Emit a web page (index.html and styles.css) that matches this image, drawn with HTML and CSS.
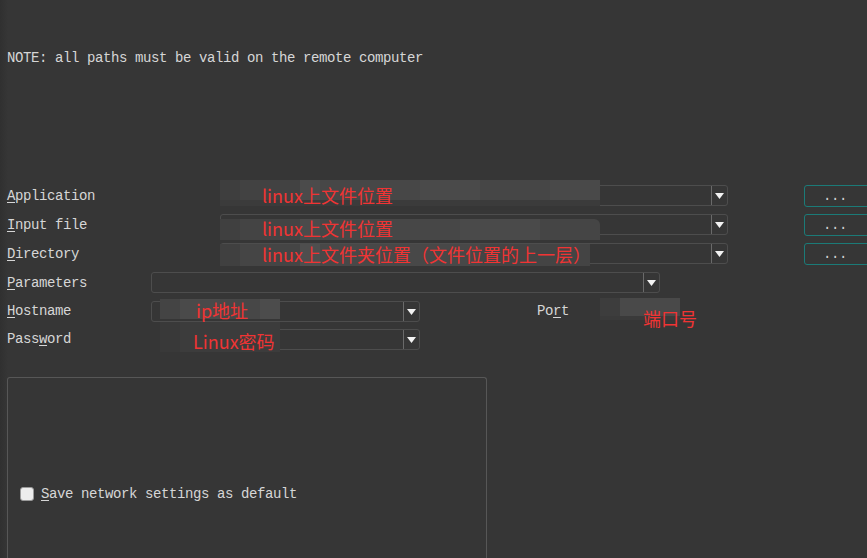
FILE: index.html
```html
<!DOCTYPE html>
<html>
<head>
<meta charset="utf-8">
<link rel="stylesheet" href="styles.css">
</head>
<body>
<div class="page">
  <div class="note">NOTE: all paths must be valid on the remote computer</div>

  <div class="form">
    <div class="row">
      <div class="label"><u>A</u>pplication</div>
      <div class="combo combo-path"><div class="drop"><svg width="9" height="6" viewBox="0 0 9 6"><polygon points="0,0 9,0 4.5,6" fill="#f2f2f2"/></svg></div></div>
      <button class="browse">...</button>
    </div>
    <div class="row">
      <div class="label"><u>I</u>nput file</div>
      <div class="combo combo-path"><div class="drop"><svg width="9" height="6" viewBox="0 0 9 6"><polygon points="0,0 9,0 4.5,6" fill="#f2f2f2"/></svg></div></div>
      <button class="browse">...</button>
    </div>
    <div class="row">
      <div class="label"><u>D</u>irectory</div>
      <div class="combo combo-path"><div class="drop"><svg width="9" height="6" viewBox="0 0 9 6"><polygon points="0,0 9,0 4.5,6" fill="#f2f2f2"/></svg></div></div>
      <button class="browse">...</button>
    </div>
    <div class="row">
      <div class="label"><u>P</u>arameters</div>
      <div class="combo combo-params"><div class="drop"><svg width="9" height="6" viewBox="0 0 9 6"><polygon points="0,0 9,0 4.5,6" fill="#f2f2f2"/></svg></div></div>
    </div>
    <div class="row row-short">
      <div class="label"><u>H</u>ostname</div>
      <div class="combo combo-host"><div class="drop"><svg width="9" height="6" viewBox="0 0 9 6"><polygon points="0,0 9,0 4.5,6" fill="#f2f2f2"/></svg></div></div>
      <div class="port-label">Po<u>r</u>t</div>
    </div>
    <div class="row row-short">
      <div class="label">Pass<u>w</u>ord</div>
      <div class="combo combo-host"><div class="drop"><svg width="9" height="6" viewBox="0 0 9 6"><polygon points="0,0 9,0 4.5,6" fill="#f2f2f2"/></svg></div></div>
    </div>
  </div>

  <div class="group">
    <label class="check-row"><span class="check"></span><span><u>S</u>ave network settings as default</span></label>
  </div>
</div>

<div class="mosaic m-app"></div>
<div class="mosaic m-input"></div>
<div class="mosaic m-dir"></div>
<div class="mosaic m-host"></div>
<div class="mosaic m-pass"></div>
<div class="mosaic m-port"></div>

<div class="note-red r-app">linux上文件位置</div>
<div class="note-red r-input">linux上文件位置</div>
<div class="note-red r-dir">linux上文件夹位置（文件位置的上一层）</div>
<div class="note-red r-host">ip地址</div>
<div class="note-red r-pass">Linux密码</div>
<div class="note-red r-port">端口号</div>
</body>
</html>
```

FILE: styles.css
```css
html, body {
  margin: 0;
  padding: 0;
  height: 100%;
}
body {
  background: linear-gradient(to right, #303030 0, #363636 8px) #363636;
  overflow: hidden;
  position: relative;
  font-family: "Liberation Mono", "DejaVu Sans Mono", monospace;
  font-size: 14px;
  letter-spacing: -0.4px;
  color: #d6d6d6;
}
u {
  text-decoration: underline;
  text-underline-offset: 2px;
  text-decoration-thickness: 1px;
}
.page {
  padding-left: 7px;
  padding-top: 50px;
}
.note {
  line-height: 16px;
  height: 16px;
  white-space: nowrap;
}
.form {
  margin-top: 115px;
}
.row {
  display: flex;
  align-items: center;
  height: 29px;
}
.row-short {
  height: 28px;
}
.label {
  width: 144px;
  flex: none;
  white-space: nowrap;
}
.combo {
  flex: none;
  height: 21px;
  box-sizing: border-box;
  border: 1px solid #4d4d4d;
  border-radius: 3px;
  display: flex;
  justify-content: flex-end;
}
.drop {
  width: 15px;
  border-left: 1px solid #6a6a6a;
  display: flex;
  align-items: center;
  justify-content: center;
}
.drop svg {
  display: block;
  margin-top: 1px;
}
.combo-path {
  margin-left: 69px;
  width: 508px;
}
.combo-params {
  width: 509px;
}
.combo-host {
  width: 269px;
}
.browse {
  flex: none;
  margin-left: 76px;
  width: 66px;
  height: 22px;
  box-sizing: border-box;
  border: 1px solid #1b7b78;
  border-radius: 3px;
  background: #363636;
  color: #d0d0d0;
  font-family: "Liberation Mono", monospace;
  font-size: 14px;
  letter-spacing: -0.4px;
  text-align: left;
  padding: 0 0 0 18px;
  line-height: 18px;
}
.port-label {
  margin-left: 117px;
  white-space: nowrap;
}
.group {
  margin-top: 24px;
  width: 480px;
  height: 182px;
  box-sizing: border-box;
  border: 1px solid #575757;
  border-bottom: none;
  border-radius: 3px 3px 0 0;
  padding: 108px 0 0 12px;
}
.check-row {
  display: flex;
  align-items: center;
  gap: 7px;
  line-height: 16px;
  white-space: nowrap;
}
.check {
  width: 14px;
  height: 14px;
  box-sizing: border-box;
  border-radius: 3px;
  background: #ededed;
  border: 1px solid #9a9a9a;
  flex: none;
}

/* redaction mosaics laid over the screenshot fields */
.mosaic {
  position: absolute;
}
.m-app {
  left: 220px; top: 180px; width: 380px; height: 26px;
  background:
    linear-gradient(to bottom, transparent 0 20px, #3b3b3b 20px 26px),
    linear-gradient(to right, #3e3e3e 0 20px, #424242 20px 80px, #4b4b4b 80px 100px, #474747 100px 200px, #4a4a4a 200px 260px, #464646 260px 330px, #494949 330px 380px);
}
.m-input {
  left: 220px; top: 219px; width: 380px; height: 21px;
  background: linear-gradient(to right, #404040 0 20px, #444 20px 80px, #4b4b4b 80px 100px, #474747 100px 240px, #4a4a4a 240px 320px, #454545 320px 380px);
  border-radius: 0 6px 0 0;
}
.m-dir {
  left: 220px; top: 244px; width: 370px; height: 22px;
  background: linear-gradient(to right, #404040 0 20px, #454545 20px 80px, #4e4e4e 80px 100px, #484848 100px 260px, #444 260px 370px);
}
.m-host {
  left: 160px; top: 299px; width: 120px; height: 20px;
  background: linear-gradient(to right, #444 0 20px, #4a4a4a 20px 60px, #474747 60px 100px, #4c4c4c 100px 120px);
}
.m-pass {
  left: 148px; top: 322px; width: 132px; height: 30px;
  background: linear-gradient(to right, #363636 0 12px, #393939 12px 32px, #3c3c3c 32px 132px);
}
.m-port {
  left: 600px; top: 298px; width: 80px; height: 22px;
  background:
    linear-gradient(to bottom, transparent 0 18px, #3a3a3a 18px 22px),
    linear-gradient(to right, #3d3d3d 0 20px, #494949 20px 80px);
}

.note-red {
  position: absolute;
  font-family: "Noto Sans CJK SC", "Noto Sans", sans-serif;
  font-size: 18px;
  line-height: 18px;
  letter-spacing: 0;
  color: #f03434;
  white-space: nowrap;
}
.r-app { left: 262px; top: 186px; }
.r-input { left: 262px; top: 219px; }
.r-dir { left: 262px; top: 245px; }
.r-host { left: 196px; top: 301px; }
.r-pass { left: 193px; top: 332px; }
.r-port { left: 643px; top: 309px; }
```
